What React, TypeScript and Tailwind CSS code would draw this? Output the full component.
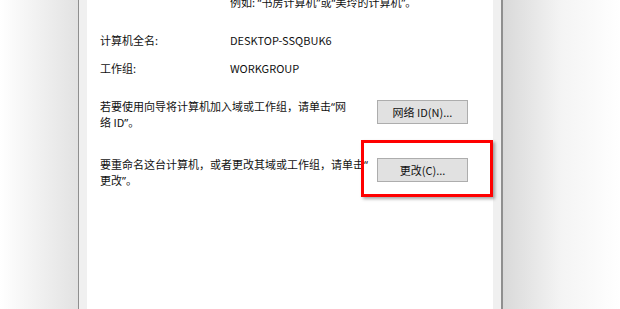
import React from "react";

function Q({ c }: { c: string }) {
  return <span className="font-['Noto_Sans',sans-serif] leading-[0px]">{c}</span>;
}

export default function App() {
  return (
    <div className="relative w-[620px] h-[309px] flex overflow-hidden bg-white text-[11px] leading-[16px] text-[#111] font-['Noto_Sans_CJK_SC','Noto_Sans',sans-serif]">
      <div className="w-[78px] bg-gradient-to-r from-white to-[#e2e2e2]" />
      <div className="w-px bg-[#8f8f8f]" />
      <div className="w-[8px] bg-[#f0f0f0]" />
      <div className="w-[406px] bg-white pl-[13px] flex flex-col">
        <div className="mt-[-6px] pl-[130px] whitespace-nowrap">
          例如: <Q c="“" />书房计算机<Q c="”" />或<Q c="“" />美玲的计算机<Q c="”" />。
        </div>
        <div className="mt-[22px] flex whitespace-nowrap">
          <div className="w-[130px]">计算机全名:</div>
          <div>DESKTOP-SSQBUK6</div>
        </div>
        <div className="mt-[12px] flex whitespace-nowrap">
          <div className="w-[130px]">工作组:</div>
          <div>WORKGROUP</div>
        </div>
        <div className="mt-[22px] flex">
          <div className="w-[277px] whitespace-nowrap">
            若要使用向导将计算机加入域或工作组，请单击<Q c="“" />网
            <br />
            络 ID<Q c="”" />。
          </div>
          <button className="mt-[2px] w-[91px] h-[24px] bg-[#e1e1e1] border border-[#adadad] flex items-center justify-center text-[11px] leading-none">
            网络 ID(N)...
          </button>
        </div>
        <div className="mt-[26px] flex">
          <div className="w-[277px] whitespace-nowrap">
            要重命名这台计算机，或者更改其域或工作组，请单击<Q c="“" />
            <br />
            更改<Q c="”" />。
          </div>
          <button className="mt-[2px] w-[91px] h-[24px] bg-[#e1e1e1] border border-[#adadad] flex items-center justify-center text-[11px] leading-none">
            更改(C)...
          </button>
        </div>
      </div>
      <div className="w-[8px] bg-[#f0f0f0]" />
      <div className="w-[2px] bg-[#8f8f8f]" />
      <div className="flex-1 bg-gradient-to-r from-[#d9d9d9] via-[#f4f4f4] to-white" />
      <div className="absolute left-[361px] top-[140px] w-[132px] h-[57px] border-[3px] border-[#ff0000] shadow-[2px_2px_3px_rgba(0,0,0,0.35)]" />
    </div>
  );
}
